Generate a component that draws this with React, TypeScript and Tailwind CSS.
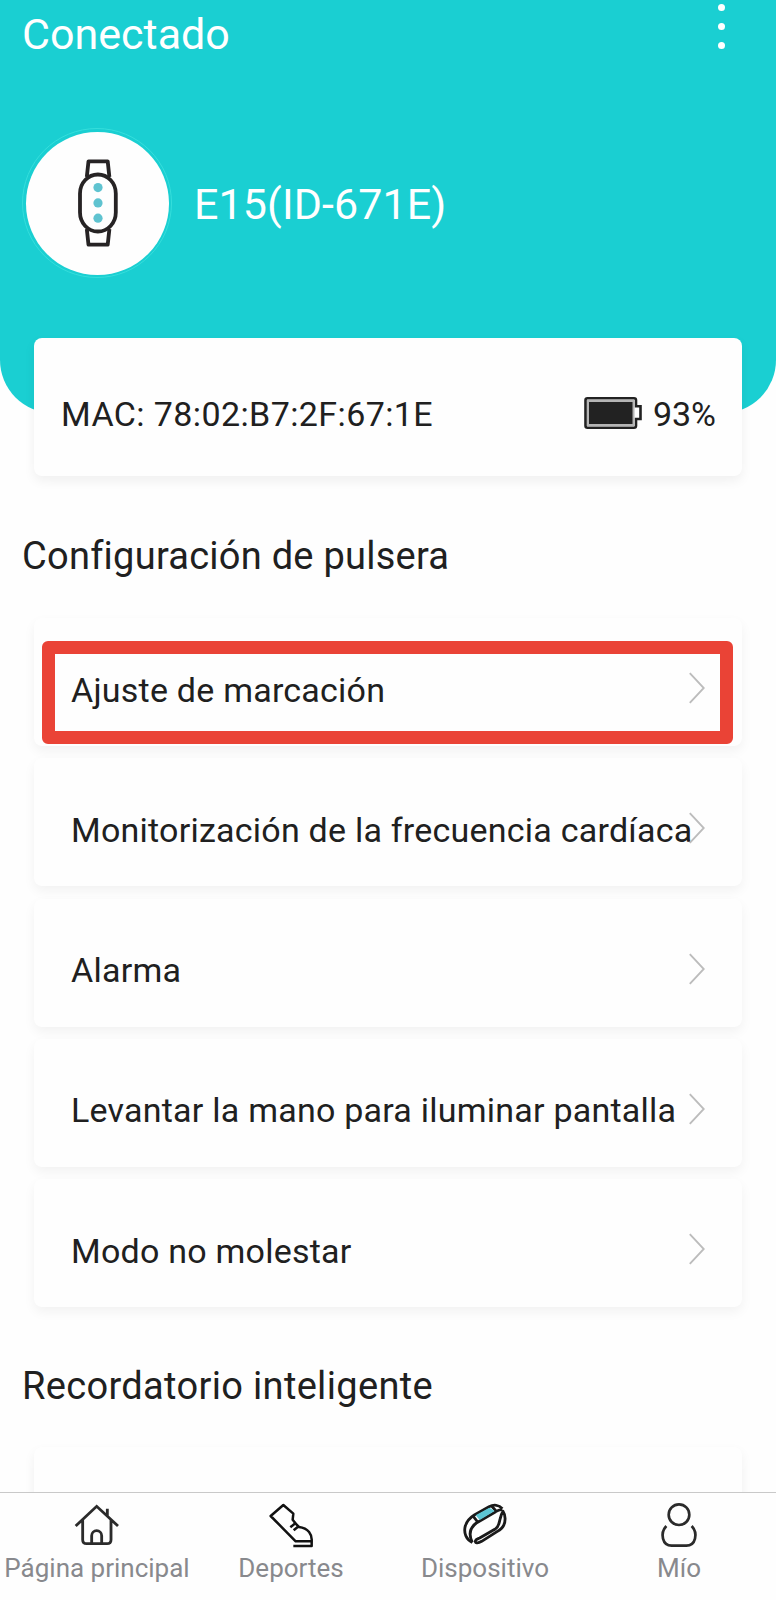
import type { ReactNode } from "react";

const settings = [
  "Ajuste de marcación",
  "Monitorización de la frecuencia cardíaca",
  "Alarma",
  "Levantar la mano para iluminar pantalla",
  "Modo no molestar",
];

function WatchIcon() {
  return (
    <svg width="42" height="88" viewBox="0 0 42 88" fill="none" stroke="#262324" strokeWidth="3.8" strokeLinejoin="round">
      <path d="M9.8 18 11.5 2.3H30.7L32.4 18M9.8 70 11.5 85.7H30.7L32.4 70" />
      <rect x="3" y="15.5" width="35.8" height="57" rx="17.9" ry="19" fill="#fefefe" />
      <g fill="#5fc3d0" stroke="none">
        <circle cx="21" cy="28.6" r="4.6" />
        <circle cx="21" cy="43.9" r="4.6" />
        <circle cx="21" cy="59.2" r="4.6" />
      </g>
    </svg>
  );
}

function BatteryIcon() {
  return (
    <svg className="-mt-[2px]" width="58" height="32" viewBox="0 0 58 32" fill="none">
      <path d="M3.5 1.3H50q2 0 2 2V9.3h4.500V22H52v6.7q0 2-2 2H3.5q-2 0-2-2V3.3q0-2 2-2Z" fill="#fff" stroke="#222" strokeWidth="2.6" />
      <rect x="3" y="2.8" width="47.5" height="26.4" fill="#b5b5b5" />
      <rect x="5" y="5" width="43.5" height="22" fill="#222" />
    </svg>
  );
}

function ChevronIcon() {
  return (
    <svg className="shrink-0" width="16" height="32" viewBox="0 0 16 32" fill="none" stroke="#bcbcbc" strokeWidth="1.9">
      <path d="M.8 1.2 14.8 16 .8 30.8" />
    </svg>
  );
}

function HomeIcon() {
  return (
    <svg width="48" height="48" viewBox="0 0 144 144" fill="none" stroke="#2b2b2b" strokeWidth="8.5">
      <path d="M8 72 71 13 135 72M103 20V42M29 55V113q0 12 12 12H102q12 0 12-12V55" />
      <path d="M56 125V101a15 15 0 0 1 30 0V125" />
    </svg>
  );
}

function ShoeIcon() {
  return (
    <svg width="48" height="48" viewBox="0 0 144 144" fill="none" stroke="#111" strokeWidth="7.5" strokeLinejoin="round">
      <path d="M11 42 49 9 79 35 77 53 89 68 96 75C124 78 136 98 134 118H86Z" />
      <path d="M134 118V132H79M87 62 70 76M96 72 80 85" />
    </svg>
  );
}

function BandIcon() {
  return (
    <svg width="48" height="48" viewBox="0 0 144 144" fill="none" stroke="#1a1a1a" strokeWidth="8.5" strokeLinejoin="round">
      <path d="M34 121C14 112 9 92 12 76 15 60 24 49 40 39L84 14C98 7 114 8 124 20" />
      <path d="M34 121C23 99 26 78 46 63L104 29Q112 24 124 22" />
      <path d="M36 42 50 60M92 12 106 28" />
      <path d="M126 28C134 40 134 58 128 70 124 79 116 84 108 89L62 118C50 125 42 123 43 117 44 112 50 111 56 108L104 80C115 73 114 60 118 49Q120 38 126 28Z" />
      <path d="M44 40 85 17 101 27 56 54Z" fill="#5cc6d4" stroke="none" />
    </svg>
  );
}

function PersonIcon() {
  return (
    <svg width="48" height="48" viewBox="0 0 144 144" fill="none" stroke="#2b2b2b" strokeWidth="8">
      <circle cx="72" cy="38" r="31" />
      <path d="M34 72C14 94 22 131 50 131H94C122 131 130 94 110 72" />
    </svg>
  );
}

function Tab({ icon, label }: { icon: ReactNode; label: string }) {
  return (
    <a className="flex w-[194px] flex-col items-center pt-[9px]">
      {icon}
      <span className="mt-[2px] whitespace-nowrap text-[26px] leading-[32px] text-[#88898d]">{label}</span>
    </a>
  );
}

export default function App() {
  return (
    <div className="flex h-[1600px] w-[776px] flex-col overflow-hidden bg-[#fefefe] font-[Roboto,sans-serif] text-[#202020]">
      <main className="min-h-0 flex-1 overflow-hidden">
        <header className="h-[413px] rounded-b-[53px] bg-[#1acfd2] text-white">
          <div className="flex h-[128px] items-start justify-between pl-[22px] pr-[51px]">
            <h1 className="pt-[9px] text-[43px] leading-[50px]">Conectado</h1>
            <div className="flex flex-col gap-3 pt-1">
              <span className="size-[7px] rounded-full bg-white" />
              <span className="size-[7px] rounded-full bg-white" />
              <span className="size-[7px] rounded-full bg-white" />
            </div>
          </div>
          <div className="flex items-center pl-[22px]">
            <div className="flex size-[150px] items-center justify-center rounded-full border border-[#35dedc] p-[2.5px]">
              <div className="flex size-full items-center justify-center rounded-full bg-[#fefefe] pl-[2px]">
                <WatchIcon />
              </div>
            </div>
            <p className="pl-[22px] pt-[2px] text-[43px] leading-[50px] tracking-[0.1px]">E15(ID-671E)</p>
          </div>
        </header>

        <section className="relative mx-[34px] -mt-[75px] flex h-[138px] items-center rounded-lg bg-[#fefefe] pl-[27px] pr-[26px] pt-[14px] text-[34px] leading-[40px] shadow-[0_5px_12px_rgba(0,0,0,0.06)]">
          <span className="flex-1 tracking-[0.4px]">MAC: 78:02:B7:2F:67:1E</span>
          <BatteryIcon />
          <span className="pl-[11px]">93%</span>
        </section>

        <h2 className="mt-[57px] pl-[22px] text-[38px] leading-[46px] tracking-[0.25px]">Configuración de pulsera</h2>

        <ul className="mt-[39px] flex flex-col gap-[12.3px] px-[34px]">
          {settings.map((label, i) => (
            <li
              key={label}
              className="relative flex h-[128px] items-center justify-between rounded-lg bg-[#fefefe] px-[37px] pt-[12px] shadow-[0_5px_12px_rgba(0,0,0,0.05)]"
            >
              <span className="w-0 whitespace-nowrap pt-[3px] text-[34px] leading-[40px] tracking-[0.23px]">{label}</span>
              <ChevronIcon />
              {i === 0 && (
                <div className="absolute left-[8px] top-[23px] h-[103px] w-[691px] rounded-md border-[13px] border-[#ea4336]" />
              )}
            </li>
          ))}
        </ul>

        <h2 className="mt-[56px] pl-[22px] text-[38px] leading-[46px] tracking-[0.33px]">Recordatorio inteligente</h2>
        <div className="mx-[34px] mt-[38px] h-[128px] rounded-lg bg-[#fefefe] shadow-[0_5px_12px_rgba(0,0,0,0.06)]" />
      </main>

      <nav className="flex h-[108px] shrink-0 border-t border-[#c9c9c9] bg-[#fefefe]">
        <Tab icon={<HomeIcon />} label="Página principal" />
        <Tab icon={<ShoeIcon />} label="Deportes" />
        <Tab icon={<BandIcon />} label="Dispositivo" />
        <Tab icon={<PersonIcon />} label="Mío" />
      </nav>
    </div>
  );
}
